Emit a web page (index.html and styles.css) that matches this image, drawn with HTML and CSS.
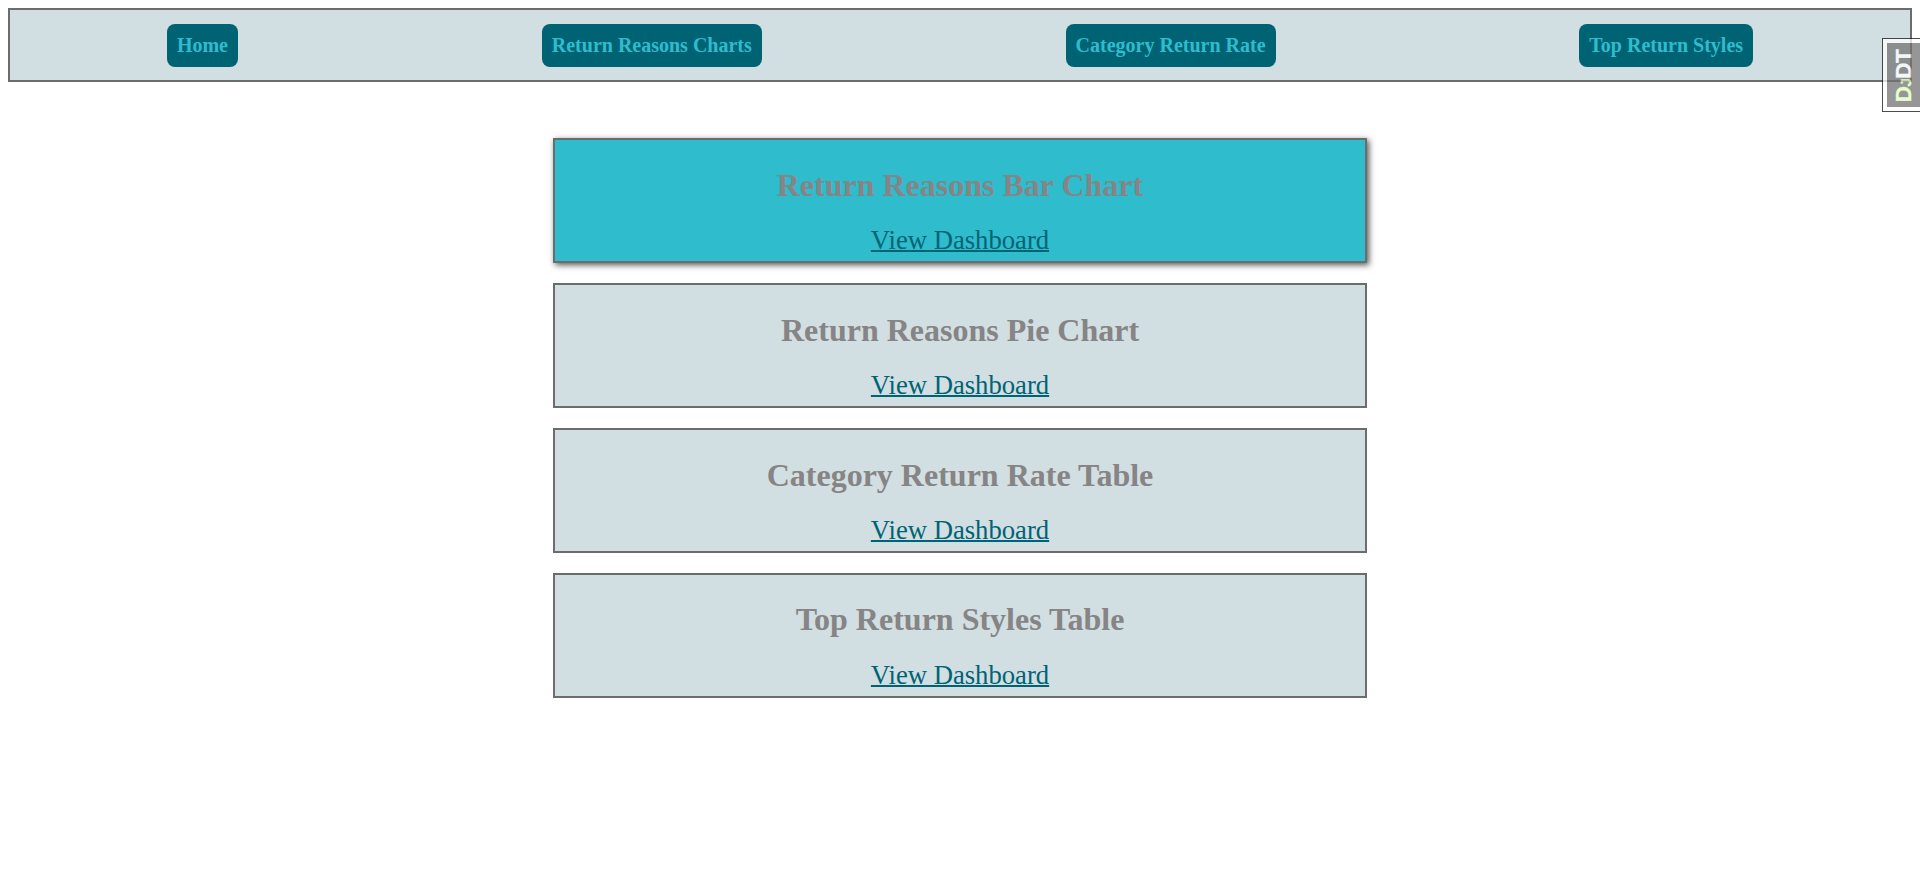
FILE: index.html
```html
<!DOCTYPE html>
<html lang="en">
<head>
<meta charset="utf-8">
<title>Returns Dashboard</title>
<link rel="stylesheet" href="styles.css">
</head>
<body>
<nav class="nav">
  <a class="nav-link" href="#">Home</a>
  <a class="nav-link" href="#">Return Reasons Charts</a>
  <a class="nav-link" href="#">Category Return Rate</a>
  <a class="nav-link" href="#">Top Return Styles</a>
</nav>
<main class="cards">
  <section class="card card-active"><h1 class="title">Return Reasons Bar Chart</h1><a class="view" href="#">View Dashboard</a></section>
  <section class="card"><h1 class="title">Return Reasons Pie Chart</h1><a class="view" href="#">View Dashboard</a></section>
  <section class="card"><h1 class="title">Category Return Rate Table</h1><a class="view" href="#">View Dashboard</a></section>
  <section class="card"><h1 class="title">Top Return Styles Table</h1><a class="view" href="#">View Dashboard</a></section>
</main>
<div class="debug-handle"><div class="debug-button"><span class="debug-text"><span class="debug-d">D</span><span class="debug-j">J</span>DT</span></div></div>
</body>
</html>
```
FILE: styles.css
```css
body {
  margin: 8px;
  font-family: "Liberation Serif", "Times New Roman", serif;
  background: #fff;
}
.nav {
  display: flex;
  justify-content: space-around;
  align-items: flex-start;
  box-sizing: border-box;
  height: 74px;
  padding: 14px 5px 13px;
  border: 2px solid #6c6c6c;
  background: #d1dee2;
}
.nav-link {
  padding: 10px;
  border-radius: 8px;
  background: #006374;
  color: #2fbccd;
  font-size: 20px;
  font-weight: bold;
  line-height: 23px;
  text-decoration: none;
}
.cards {
  display: flex;
  flex-direction: column;
  gap: 20px;
  width: 814px;
  margin: 56px auto 0;
}
.card {
  box-sizing: border-box;
  height: 125px;
  padding: 5px;
  border: 2px solid #6c6c6c;
  background: #d1dee2;
  text-align: center;
}
.card-active {
  background: #2fbccd;
  box-shadow: 2px 2px 6px #555;
}
.title {
  margin: 22px 0 21px;
  color: #868484;
  font-size: 32px;
  line-height: 37px;
}
.card:last-child .title {
  margin: 21px 0 22px;
}
.view {
  display: block;
  color: #006374;
  font-size: 26.67px;
  line-height: 30px;
  text-decoration-thickness: 2px;
}
.debug-handle {
  position: fixed;
  top: 38px;
  right: 0;
  box-sizing: border-box;
  width: 38px;
  height: 74px;
  padding: 4px 0 4px 4px;
  border: 1px solid #111;
  border-right: 0;
  background: #fff;
  opacity: 0.75;
}
.debug-button {
  display: flex;
  align-items: center;
  justify-content: center;
  height: 64px;
  background: #737373;
}
.debug-text {
  flex: none;
  color: #fff;
  font: bold 22.5px/22px "Liberation Sans", Arial, sans-serif;
  letter-spacing: -0.5px;
  white-space: nowrap;
  transform: translate(2px, 1px) rotate(-90deg);
  -webkit-text-stroke: 0.3px currentColor;
}
.debug-d {
  color: #dfb;
}
.debug-j {
  color: #dfb;
  font-size: 15px;
}
```
